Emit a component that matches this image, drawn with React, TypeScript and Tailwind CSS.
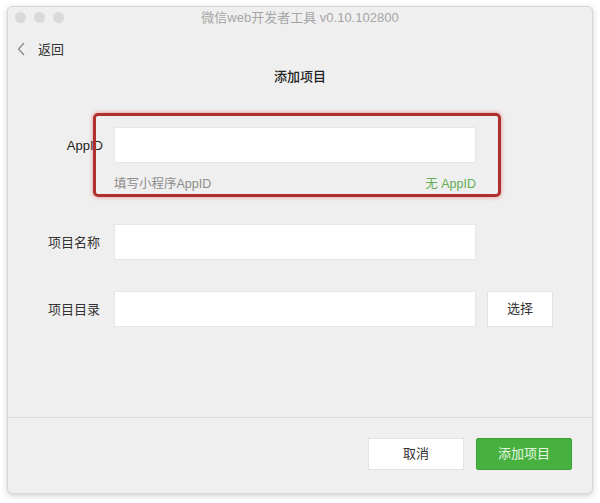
import React from "react";

const font = { fontFamily: '"Liberation Sans", "Noto Sans CJK SC", sans-serif' };

export default function App() {
  return (
    <div className="w-[600px] h-[503px] bg-white overflow-hidden pt-[6px] pl-[7px]" style={font}>
      <div className="w-[586px] h-[488px] rounded-[5px] border border-[#d6d6d6] bg-[#f0efef] shadow-[0_2px_6px_rgba(0,0,0,0.18)] flex flex-col">
        {/* title bar */}
        <div className="h-[20px] grid grid-cols-[1fr_auto_1fr] items-center">
          <div className="flex items-center gap-[8px] pl-[7px]">
            <span className="w-[11px] h-[11px] rounded-full bg-[#d9d9d9]" />
            <span className="w-[11px] h-[11px] rounded-full bg-[#d9d9d9]" />
            <span className="w-[11px] h-[11px] rounded-full bg-[#d9d9d9]" />
          </div>
          <div className="text-[13px] text-[#a6a6a6] leading-none">微信web开发者工具 v0.10.102800</div>
          <div />
        </div>

        {/* back row */}
        <div className="mt-[13px] h-[18px] flex items-center pl-[9px]">
          <svg width="8" height="14" viewBox="0 0 8 14" fill="none">
            <path d="M7 1L1.5 7L7 13" stroke="#8a8a8a" strokeWidth="1.3" />
          </svg>
          <span className="ml-[13px] text-[13px] text-[#333] leading-none">返回</span>
        </div>

        {/* page title */}
        <div className="mt-[9px] h-[18px] flex items-center justify-center text-[13px] text-[#222] font-medium leading-none">
          添加项目
        </div>

        {/* form */}
        <div className="mt-[42px] relative">
          <div className="flex items-center">
            <div className="w-[95px] text-right text-[13px] text-[#222] leading-none">AppID</div>
            <div className="ml-[11px] w-[362px] h-[36px] bg-white border border-[#e6e6e6]" />
          </div>
          <div className="mt-[13px] flex items-center justify-between ml-[106px] w-[362px] text-[12.5px] leading-[16px]">
            <span className="text-[#8c8c8c]">填写小程序AppID</span>
            <span className="text-[#5fae55]">无 AppID</span>
          </div>
          <div className="absolute left-[85px] top-[-14px] w-[408px] h-[84px] rounded-[5px] border-[3px] border-[#b0302d] shadow-[0_0_4px_rgba(210,60,60,0.55)]" />
        </div>

        <div className="mt-[32px] flex items-center">
          <div className="w-[92px] text-right text-[13px] text-[#333] leading-none">项目名称</div>
          <div className="ml-[14px] w-[362px] h-[36px] bg-white border border-[#e6e6e6]" />
        </div>

        <div className="mt-[31px] flex items-center">
          <div className="w-[92px] text-right text-[13px] text-[#333] leading-none">项目目录</div>
          <div className="ml-[14px] w-[362px] h-[36px] bg-white border border-[#e6e6e6]" />
          <div className="ml-[11px] w-[66px] h-[36px] bg-white border border-[#e3e3e3] flex items-center justify-center text-[13px] text-[#333]">
            选择
          </div>
        </div>

        <div className="flex-1" />

        {/* footer */}
        <div className="h-[76px] border-t border-[#dcdcdc] flex justify-end items-start pt-[20px] pr-[20px] gap-[12px]">
          <div className="w-[96px] h-[32px] bg-white border border-[#e3e3e3] flex items-center justify-center text-[13px] text-[#333]">
            取消
          </div>
          <div className="w-[96px] h-[32px] bg-[#47b13f] border border-[#3ea136] rounded-[2px] flex items-center justify-center text-[13px] text-[#e6f6e3]">
            添加项目
          </div>
        </div>
      </div>
    </div>
  );
}
